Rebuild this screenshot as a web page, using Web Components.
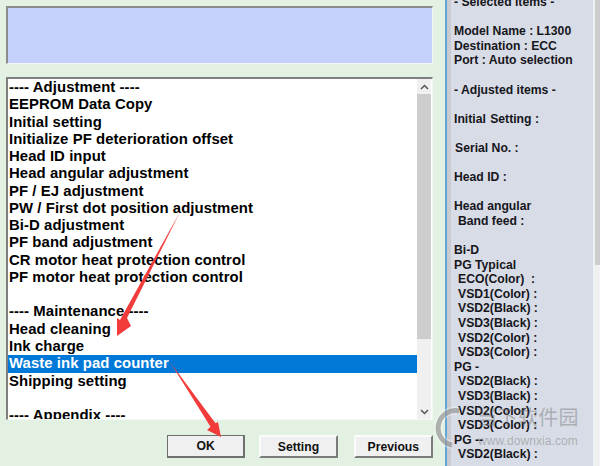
<!DOCTYPE html>
<html>
<head>
<meta charset="utf-8">
<style>
  html, body { margin: 0; padding: 0; }
  body { width: 600px; height: 466px; overflow: hidden; font-family: "Liberation Sans", Arial, sans-serif; }
</style>
</head>
<body>
<adjust-window>
  <service-panel>
    <sunken-box slot="message"></sunken-box>
    <item-list slot="list"></item-list>
    <win-button slot="buttons" class="ok">OK</win-button>
    <win-button slot="buttons" class="setting">Setting</win-button>
    <win-button slot="buttons" class="previous">Previous</win-button>
  </service-panel>
  <info-panel slot="side"></info-panel>
</adjust-window>

<script>
class AdjustWindow extends HTMLElement {
  constructor() {
    super();
    this.attachShadow({ mode: 'open' });
  }

  connectedCallback() {
    this.shadowRoot.innerHTML = `
      <style>
        :host {
          display: grid;
          grid-template-columns: 445px 2px 4px 1fr;
          width: 600px;
          height: 466px;
          position: relative;
          overflow: hidden;
        }
        .edge { background: #5fa5d6; }
        .gutter { background: #c9cbd1; }
        .side { display: block; min-width: 0; }
        svg.arrows { position: absolute; left: 0; top: 0; pointer-events: none; }
        .mark { position: absolute; left: 452px; top: 405px; pointer-events: none; color: rgba(105,105,105,.42); }
        .mark .cn { position: absolute; left: 25px; top: 0; font: 20px/24px "Noto Sans CJK SC", sans-serif; white-space: nowrap; letter-spacing: .4px; }
        .mark .en { position: absolute; left: 26px; top: 28px; font: 12px/16px "Liberation Sans", sans-serif; white-space: nowrap; letter-spacing: .08px; }
      </style>
      <slot></slot>
      <div class="edge"></div>
      <div class="gutter"></div>
      <div class="side"><slot name="side"></slot></div>
      <svg class="arrows" width="600" height="466" viewBox="0 0 600 466">
        <path d="M180 212 L127 318 L131 326 L117 336 L117 318 L120 320 Z" fill="#f23b3b"/>
        <path d="M170 362 L215.5 423.3 L218 422 L221 437 L207 430 L210.5 426.7 Z" fill="#f23b3b"/>
      </svg>
      <div class="mark">
        <svg width="40" height="50" viewBox="0 0 40 50" style="position:absolute;left:-20px;top:0">
          <path d="M27 6 A17 17 0 1 0 20 40" fill="none" stroke="rgba(255,255,255,.35)" stroke-width="8"/>
          <path d="M27 6 A17 17 0 1 0 20 40" fill="none" stroke="rgba(130,130,130,.6)" stroke-width="5"/>
        </svg>
        <span class="cn">当下软件园</span>
        <span class="en">www.downxia.com</span>
      </div>
    `;
  }
}

class ServicePanel extends HTMLElement {
  constructor() {
    super();
    this.attachShadow({ mode: 'open' });
  }

  connectedCallback() {
    this.shadowRoot.innerHTML = `
      <style>
        :host {
          display: flex;
          flex-direction: column;
          background: #e3f1e3;
          padding: 6px 12px 0 6px;
          height: 466px;
          box-sizing: border-box;
        }
        .buttons { display: flex; gap: 14px; margin: 15px 0 0 161px; }
      </style>
      <slot name="message"></slot>
      <slot name="list"></slot>
      <div class="buttons"><slot name="buttons"></slot></div>
    `;
  }
}

class SunkenBox extends HTMLElement {
  constructor() {
    super();
    this.attachShadow({ mode: 'open' });
  }

  connectedCallback() {
    this.shadowRoot.innerHTML = `
      <style>
        :host {
          display: block;
          height: 58px;
          box-sizing: border-box;
          background: #c5d0fd;
          border: 1px solid;
          border-width: 2px 1px 1px 2px;
          border-color: #8c8c8c #f4f8f4 #f4f8f4 #8c8c8c;
          margin-bottom: 13px;
        }
      </style>
    `;
  }
}

const LIST_ROWS = [
  '---- Adjustment ----', 'EEPROM Data Copy', 'Initial setting',
  'Initialize PF deterioration offset', 'Head ID input', 'Head angular adjustment',
  'PF / EJ adjustment', 'PW / First dot position adjustment', 'Bi-D adjustment',
  'PF band adjustment', 'CR motor heat protection control', 'PF motor heat protection control',
  '', '---- Maintenance ----', 'Head cleaning', 'Ink charge', 'Waste ink pad counter',
  'Shipping setting', '', '---- Appendix ----'
];

class ItemList extends HTMLElement {
  constructor() {
    super();
    this.attachShadow({ mode: 'open' });
  }

  connectedCallback() {
    const rows = LIST_ROWS.map((t, i) =>
      `<div class="row${i === 16 ? ' sel' : ''}">${t || '&nbsp;'}</div>`).join('');
    this.shadowRoot.innerHTML = `
      <style>
        :host {
          display: grid;
          grid-template-columns: 1fr 15px;
          height: 343px;
          box-sizing: border-box;
          background: #fff;
          border: 1px solid;
          border-color: #7f7f7f #f4f8f4 #f4f8f4 #7f7f7f;
          border-width: 2px 1px 1px 2px;
          overflow: hidden;
        }
        .rows { overflow: hidden; }
        .row {
          height: 17.27px;
          line-height: 17.27px;
          padding-left: 1px;
          font-size: 14.9px;
          letter-spacing: .07px;
          font-weight: bold;
          color: #000;
          white-space: nowrap;
        }
        .sel { background: #0078d7; color: #fff; }
        .bar {
          background: #f0f0f0;
          display: flex;
          flex-direction: column;
          align-items: stretch;
          margin-right: 1px;
        }
        .btn { height: 15px; display: flex; align-items: center; justify-content: center; flex: none; }
        .thumb { height: 245px; background: #cdcdcd; flex: none; }
        .track { flex: 1; }
      </style>
      <div class="rows">${rows}</div>
      <div class="bar">
        <div class="btn"><svg width="9" height="6" viewBox="0 0 9 6"><path d="M1 5 L4.5 1.5 L8 5" fill="none" stroke="#555" stroke-width="1.5"/></svg></div>
        <div class="thumb"></div>
        <div class="track"></div>
        <div class="btn"><svg width="9" height="6" viewBox="0 0 9 6"><path d="M1 1 L4.5 4.5 L8 1" fill="none" stroke="#555" stroke-width="1.5"/></svg></div>
      </div>
    `;
  }
}

class WinButton extends HTMLElement {
  constructor() {
    super();
    this.attachShadow({ mode: 'open' });
  }

  connectedCallback() {
    this.shadowRoot.innerHTML = `
      <style>
        :host {
          display: flex;
          align-items: center;
          justify-content: center;
          width: 79px;
          height: 23px;
          box-sizing: border-box;
          background: #f0f0f0;
          border: 2px solid;
          border-color: #fbfbfb #7b7b7b #7b7b7b #fbfbfb;
          font-size: 12.2px;
          font-weight: bold;
          color: #111;
        }
        :host(.ok) { border-color: #6f6f6f; border-width: 1px 2px 2px 1px; }
        :host(.previous) { width: 80px; margin-left: 2px; }
      </style>
      <slot></slot>
    `;
  }
}

const INFO_ROWS = [
  '- Selected items -', '', 'Model Name : L1300', 'Destination : ECC', 'Port : Auto selection', '',
  '- Adjusted items -', '', 'Initial<i class="gap"></i> Setting :', '', '<i class="s1"></i>Serial No. :', '', 'Head ID :', '',
  'Head angular', '<i class="s4"></i>Band feed :', '', 'Bi-D', 'PG Typical', '<i class="s4"></i>ECO(Color)&nbsp; :',
  '<i class="s4"></i>VSD1(Color) :', '<i class="s4"></i>VSD2(Black) :', '<i class="s4"></i>VSD3(Black) :', '<i class="s4"></i>VSD2(Color) :',
  '<i class="s4"></i>VSD3(Color) :', 'PG -', '<i class="s4"></i>VSD2(Black) :', '<i class="s4"></i>VSD3(Black) :',
  '<i class="s4"></i>VSD2(Color) :', '<i class="s4"></i>VSD3(Color) :', 'PG --', '<i class="s4"></i>VSD2(Black) :'
];

class InfoPanel extends HTMLElement {
  constructor() {
    super();
    this.attachShadow({ mode: 'open' });
  }

  connectedCallback() {
    const rows = INFO_ROWS.map(t => `<div class="line">${t || '&nbsp;'}</div>`).join('');
    this.shadowRoot.innerHTML = `
      <style>
        :host {
          display: grid;
          grid-template-columns: 1fr 2px 5px;
          height: 466px;
          background: #d8dce6;
          overflow: hidden;
        }
        .text { padding-left: 3px; margin-top: -5px; overflow: hidden; }
        .line {
          height: 14.6px;
          line-height: 14.6px;
          font-size: 12.2px;
          font-weight: bold;
          color: #16161c;
          white-space: nowrap;
        }
        i { display: inline-block; }
        .gap { width: 1px; }
        .s1 { width: 1px; }
        .s4 { width: 4px; }
        .sep { background: #eef2f4; }
        .bar { display: flex; flex-direction: column; background: #f0f0f0; }
        .thumb { height: 265px; background: #cdcdcd; flex: none; }
      </style>
      <div class="text">${rows}</div>
      <div class="sep"></div>
      <div class="bar"><div class="thumb"></div></div>
    `;
  }
}

customElements.define('adjust-window', AdjustWindow);
customElements.define('service-panel', ServicePanel);
customElements.define('sunken-box', SunkenBox);
customElements.define('item-list', ItemList);
customElements.define('win-button', WinButton);
customElements.define('info-panel', InfoPanel);
</script>
</body>
</html>
